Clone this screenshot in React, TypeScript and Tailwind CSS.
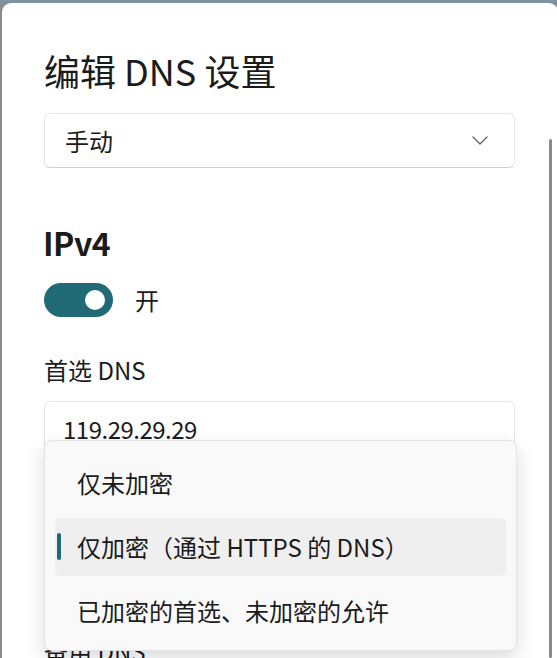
import { useState } from 'react';

const font = "font-['Noto_Sans_CJK_SC','Noto_Sans',sans-serif]";

const options = ['仅未加密', '仅加密（通过 HTTPS 的 DNS）', '已加密的首选、未加密的允许'];

function Chevron() {
  return (
    <svg width="16" height="9" viewBox="0 0 16 9" fill="none">
      <polyline points="1,1 8,8 15,1" stroke="#5c5c5c" strokeWidth="1.3" strokeLinecap="round" strokeLinejoin="round" />
    </svg>
  );
}

function Combo({ value }: { value: string }) {
  return (
    <div className="h-[55px] rounded-[6px] border border-[#e6e6e6] border-b-[#d2d2d2] bg-white flex items-center justify-between pl-[20px] pr-[26px]">
      <span className="text-[24px] text-[#1b1b1b]">{value}</span>
      <Chevron />
    </div>
  );
}

export default function App() {
  const [selected] = useState(1);

  return (
    <div className={`w-[557px] h-[658px] overflow-hidden bg-[#8c8c8c] border-t-[3px] border-[#7f929f] pl-[2px] ${font}`}>
      <div className="relative w-[556px] h-full rounded-t-[9px] bg-white pl-[42px] pt-[45px] text-[#1b1b1b]">
        <h1 className="text-[36px] leading-[44px] font-normal">编辑 DNS 设置</h1>

        <div className="w-[471px] mt-[21px]">
          <Combo value="手动" />
        </div>

        <h2 className="mt-[52px] -ml-[1px] text-[32px] leading-[44px] font-semibold tracking-[-0.5px]">IPv4</h2>

        <div className="mt-[18px] flex items-center gap-[22px]">
          <div className="w-[69px] h-[34px] rounded-full bg-[#1f6a75] flex items-center justify-end pr-[8px]">
            <div className="w-[20px] h-[20px] rounded-full bg-white" />
          </div>
          <span className="text-[24px]">开</span>
        </div>

        <p className="mt-[36px] text-[24px] leading-[32px]">首选 DNS</p>

        <div className="w-[471px] mt-[15px]">
          <div className="h-[55px] rounded-[6px] border border-[#e6e6e6] bg-white flex items-center pl-[18px]">
            <span className="text-[24px] tracking-[-0.5px]">119.29.29.29</span>
          </div>
        </div>

        <p className="mt-[18px] text-[24px] leading-[32px]">首选 DNS 加密</p>

        <div className="w-[471px] mt-[12px]">
          <Combo value={options[selected]} />
        </div>

        <p className="mt-[62px] text-[24px] leading-[32px]">备用 DNS</p>

        <div className="absolute right-[6px] top-[136px] bottom-0 w-[3px] rounded-full bg-[#8a8a8a]" />

        <div className="absolute left-[42px] top-[437px] w-[473px] h-[211px] rounded-[8px] border border-[#e3e3e3] bg-[#f9f9f9] shadow-[0_8px_20px_rgba(0,0,0,0.14)] pt-[13px] px-[10px] flex flex-col gap-[6px]">
          {options.map((opt, i) => (
            <div
              key={opt}
              className={`relative h-[58px] rounded-[5px] flex items-center pl-[22px] text-[24px] text-[#1b1b1b] ${i === selected ? 'bg-[#efefef]' : ''}`}
            >
              {i === selected && (
                <span className="absolute left-[2px] top-[15px] w-[4px] h-[27px] rounded-full bg-[#1f6a75]" />
              )}
              {opt}
            </div>
          ))}
        </div>
      </div>
    </div>
  );
}
